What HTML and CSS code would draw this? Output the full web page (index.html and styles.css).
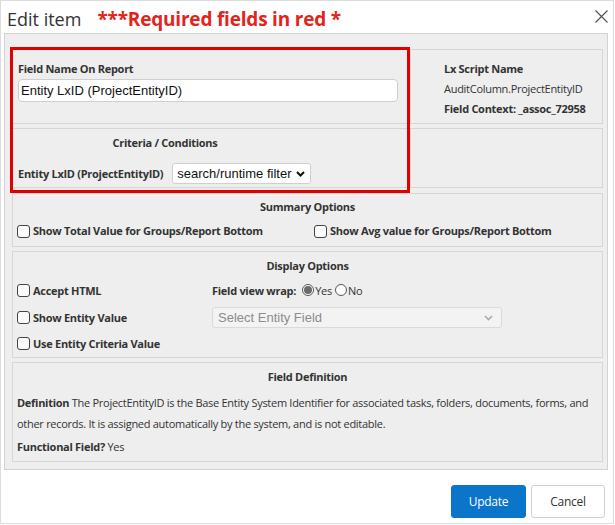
FILE: index.html
```html
<!DOCTYPE html>
<html>
<head>
<meta charset="utf-8">
<link rel="stylesheet" href="styles.css">
</head>
<body>
<div class="modal">
  <div class="header">
    <span class="title">Edit item</span>
    <span class="required">***Required fields in red *</span>
    <svg class="close" width="13" height="13" viewBox="0 0 13 13"><path d="M0.5 0.5 L12.5 12.5 M12.5 0.5 L0.5 12.5" stroke="#555" stroke-width="1.2" fill="none"/></svg>
  </div>
  <div class="content">
    <div class="top">
      <div class="required-box">
        <div class="name-box">
          <div class="lbl">Field Name On Report</div>
          <div class="text-input">Entity LxID (ProjectEntityID)</div>
        </div>
        <div class="criteria-box">
          <div class="criteria-table">
            <div class="section-title">Criteria / Conditions</div>
            <div class="criteria-row">
              <span class="lbl">Entity LxID (ProjectEntityID)</span>
              <div class="select">
                <span>search/runtime filter</span>
                <svg width="9" height="6" viewBox="0 0 9 6"><polyline points="1,1 4.5,4.5 8,1" stroke="#111" stroke-width="2" fill="none"/></svg>
              </div>
            </div>
          </div>
        </div>
      </div>
      <div class="side">
        <div class="side-box script-box">
          <div class="lbl">Lx Script Name</div>
          <div class="val">AuditColumn.ProjectEntityID</div>
          <div class="lbl">Field Context: _assoc_72958</div>
        </div>
        <div class="side-box empty-box"></div>
      </div>
    </div>

    <div class="panel summary">
      <div class="section-title">Summary Options</div>
      <div class="summary-row">
        <label class="check"><span class="box"></span><span class="lbl">Show Total Value for Groups/Report Bottom</span></label>
        <label class="check"><span class="box"></span><span class="lbl">Show Avg value for Groups/Report Bottom</span></label>
      </div>
    </div>

    <div class="panel display">
      <div class="section-title">Display Options</div>
      <div class="display-grid">
        <label class="check row1"><span class="box"></span><span class="lbl">Accept HTML</span></label>
        <div class="wrap row1">
          <span class="lbl">Field view wrap:</span>
          <span class="radio on"></span><span class="opt">Yes</span>
          <span class="radio"></span><span class="opt">No</span>
        </div>
        <label class="check row2"><span class="box"></span><span class="lbl">Show Entity Value</span></label>
        <div class="select disabled row2">
          <span>Select Entity Field</span>
          <svg width="9" height="6" viewBox="0 0 9 6"><polyline points="1,1 4.5,4.5 8,1" stroke="#aaa" stroke-width="1.6" fill="none"/></svg>
        </div>
        <label class="check row3"><span class="box"></span><span class="lbl">Use Entity Criteria Value</span></label>
      </div>
    </div>

    <div class="panel definition">
      <div class="section-title">Field Definition</div>
      <p class="def"><b>Definition</b> The ProjectEntityID is the Base Entity System Identifier for associated tasks, folders, documents, forms, and<br>other records. It is assigned automatically by the system, and is not editable.</p>
      <p class="func"><b>Functional Field?</b> Yes</p>
    </div>
  </div>
  <div class="footer">
    <button class="btn primary">Update</button>
    <button class="btn">Cancel</button>
  </div>
</div>
</body>
</html>
```
FILE: styles.css
```css
* { box-sizing: border-box; }
html, body { margin: 0; padding: 0; background: #fff; }
body {
  font-family: "Open Sans", "Noto Sans", sans-serif;
  font-size: 11px;
  letter-spacing: -0.28px;
  color: #333;
}
.modal {
  width: 614px;
  height: 524px;
  border: 1px solid #dcdcdc;
  display: flex;
  flex-direction: column;
}
.header {
  height: 32px;
  display: flex;
  align-items: center;
  padding-left: 6px;
  padding-right: 5px;
  letter-spacing: 0;
  white-space: nowrap;
}
.title {
  font-size: 18px;
  color: #333;
  margin-right: 16px;
  margin-top: 3px;
}
.required {
  font-size: 19px;
  font-weight: 700;
  color: #e3241b;
  letter-spacing: -0.2px;
  margin-top: 3px;
}
.close { margin-left: auto; margin-top: -2px; }

.content {
  margin-left: 3px;
  width: 604px;
  border: 1px solid #d2d2d2;
  background: #eeeeee;
  padding: 13px 4px 7px 7px;
  display: flex;
  flex-direction: column;
  gap: 4px;
}
.top {
  display: grid;
  grid-template-columns: 400px 1fr;
  margin-left: -2px;
  margin-bottom: -4px;
}
.lbl { font-weight: 700; white-space: nowrap; }
.required-box {
  border: 3px solid #e00000;
  padding-bottom: 2px;
  display: flex;
  flex-direction: column;
  gap: 4px;
}
.name-box {
  border-bottom: 1px solid #d6d6d6;
  padding: 12px 0 21px 5px;
  height: 74px;
}
.name-box .lbl { line-height: 14px; margin-bottom: 3px; }
.text-input {
  width: 380px;
  height: 23px;
  background: #fff;
  border: 1px solid #cfcfcf;
  border-radius: 4px;
  font-family: "Liberation Sans", Arial, sans-serif;
  font-size: 13px;
  letter-spacing: 0;
  color: #111;
  line-height: 21px;
  padding-left: 2px;
}
.criteria-box {
  border-top: 1px solid #d6d6d6;
  border-bottom: 1px solid #d6d6d6;
  height: 60px;
  padding: 7px 0 3px 5px;
}
.criteria-table { width: 294px; }
.section-title {
  font-weight: 700;
  text-align: center;
  line-height: 14px;
}
.criteria-row {
  margin-top: 13px;
  display: flex;
  align-items: center;
  gap: 9px;
  height: 21px;
}
.select {
  display: flex;
  align-items: center;
  justify-content: space-between;
  height: 21px;
  background: #fff;
  border: 1px solid #cfcfcf;
  border-radius: 3px;
  font-family: "Liberation Sans", Arial, sans-serif;
  font-size: 13px;
  letter-spacing: 0;
  color: #111;
  padding: 0 5px 0 4px;
  width: 139px;
  white-space: nowrap;
}
.select.disabled {
  width: 290px;
  background: #f3f3f3;
  border-color: #dadada;
  color: #8c8c8c;
  padding: 0 8px 0 5px;
}
.side {
  display: flex;
  flex-direction: column;
  gap: 4px;
  padding-top: 2px;
}
.side-box {
  border: 1px solid #d6d6d6;
}
.script-box {
  height: 75px;
  padding: 9px 0 4px 33px;
  line-height: 20px;
}
.empty-box { height: 60px; }

.panel {
  border: 1px solid #d6d6d6;
  padding-left: 4px;
  padding-right: 4px;
}
.summary { height: 54px; padding-top: 6px; }
.summary-row {
  margin-top: 9px;
  display: grid;
  grid-template-columns: 297px 1fr;
  line-height: 16px;
}
.check {
  display: flex;
  align-items: center;
  height: 16px;
}
.box {
  width: 13px;
  height: 13px;
  border: 1px solid #444;
  border-radius: 3px;
  background: #fbfbfb;
  margin-right: 3px;
  flex: none;
}
.display { height: 107px; padding-top: 7px; }
.display-grid {
  margin-top: 9px;
  display: grid;
  grid-template-columns: 195px 1fr;
  grid-template-rows: 16px 21px 16px;
  row-gap: 9px;
}
.display-grid .row2 { align-self: center; }
.display-grid .row3 { margin-top: -2px; }
.wrap {
  display: flex;
  align-items: center;
  height: 16px;
}
.wrap .lbl { margin-right: 6px; }
.radio {
  width: 12px;
  height: 12px;
  border: 1px solid #555;
  border-radius: 50%;
  background: #fff;
  display: flex;
  align-items: center;
  justify-content: center;
}
.radio.on::after {
  content: "";
  width: 8px;
  height: 8px;
  border-radius: 50%;
  background: #6b6b6b;
}
.opt { margin-left: 1px; margin-right: 3px; }

.definition { height: 100px; padding-top: 7px; }
.def {
  margin: 8px 0 0;
  line-height: 21px;
  white-space: nowrap;
}
.func {
  margin: 5px 0 0;
  line-height: 16px;
}

.footer {
  display: flex;
  justify-content: flex-end;
  gap: 5px;
  padding: 15px 8px 0 0;
}
.btn {
  height: 33px;
  width: 74px;
  border: 1px solid #d0d0d0;
  border-radius: 3px;
  background: #fff;
  font-family: "Open Sans", sans-serif;
  font-size: 12px;
  letter-spacing: -0.3px;
  color: #333;
  padding: 0;
}
.btn.primary {
  width: 75px;
  background: #0b75c9;
  border-color: #0b75c9;
  color: #fff;
}
```
